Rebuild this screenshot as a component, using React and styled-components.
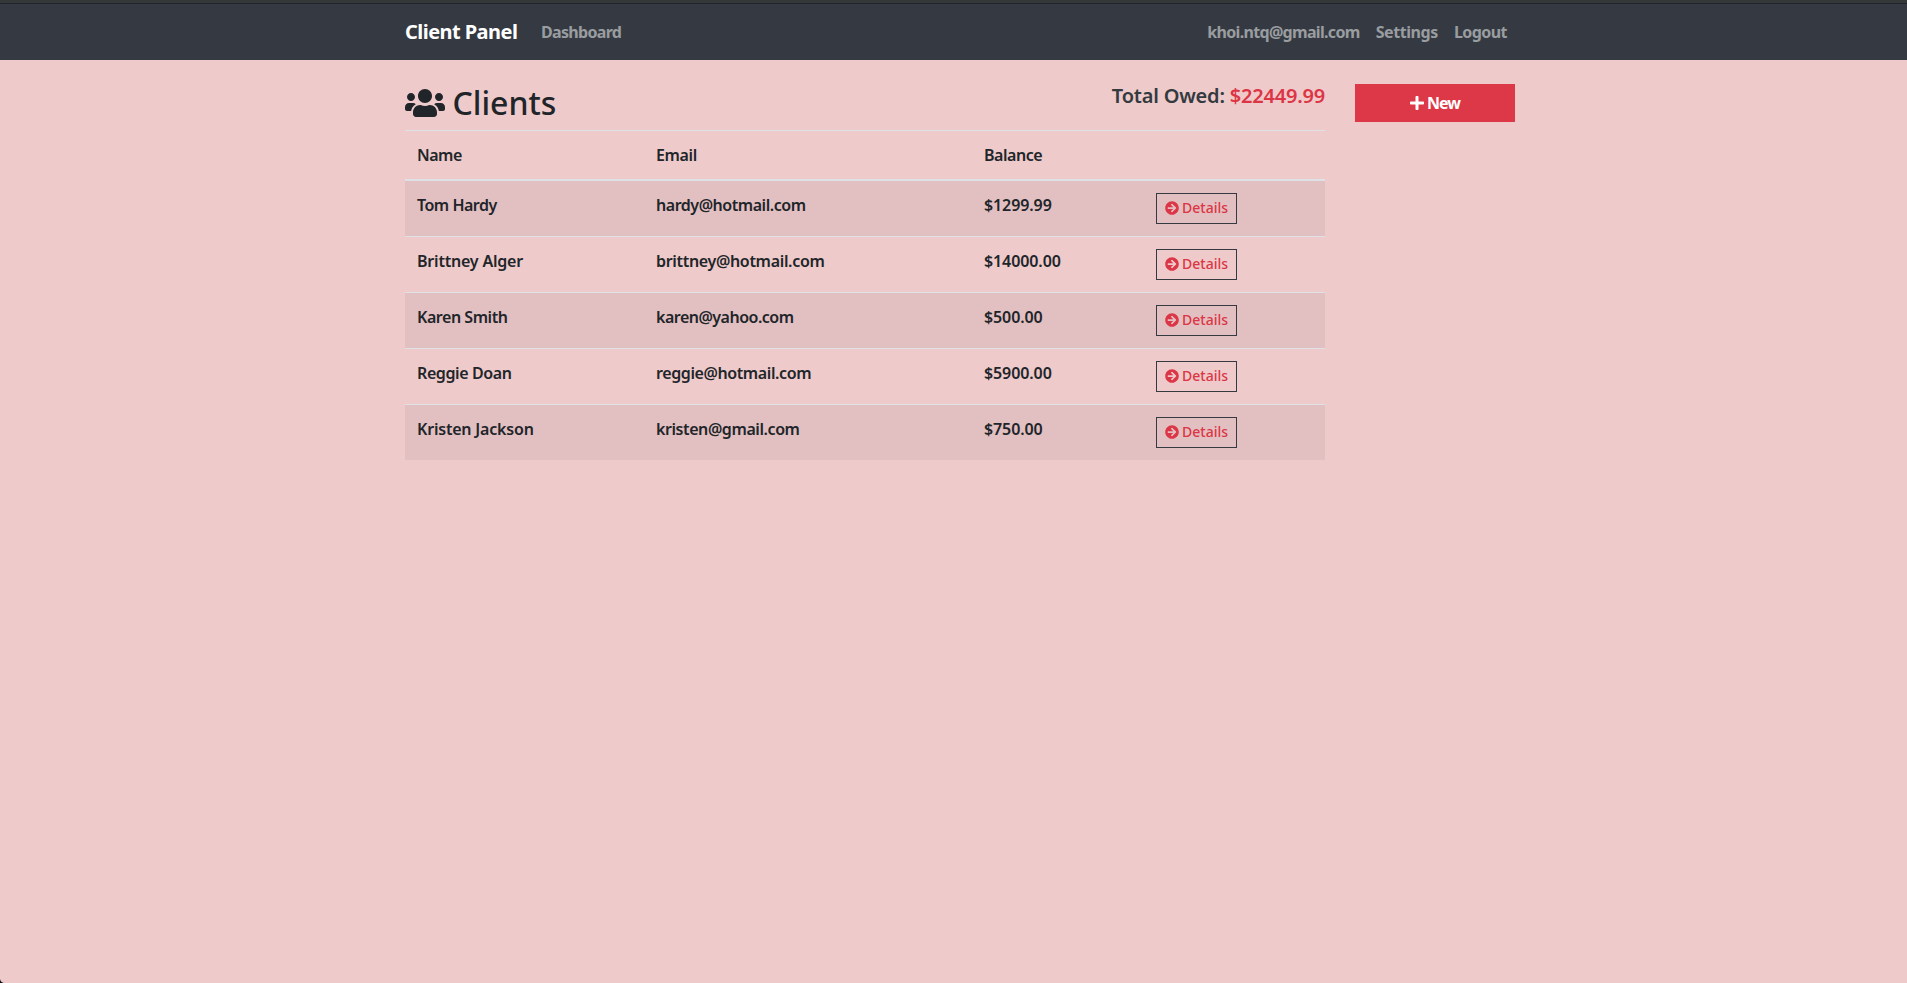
import React from "react";
import styled, { createGlobalStyle } from "styled-components";
import { FaUsers, FaPlus, FaArrowCircleRight } from "react-icons/fa";

const GlobalStyle = createGlobalStyle`
  *, *::before, *::after { box-sizing: border-box; }
  body {
    margin: 0;
    background: #eecaca;
    color: #212529;
    font: 600 16px/24px "Noto Sans", sans-serif;
    overflow: hidden;
  }
`;

const Page = styled.div`
  min-height: 100vh;
`;

const Container = styled.div`
  width: 1110px;
  margin-left: 405px;
  display: flex;
`;

const TopEdge = styled.div`
  height: 4px;
  background: #343838;
  border-bottom: 1px solid #22262a;
`;

const Navbar = styled.nav`
  height: 56px;
  display: flex;
  align-items: center;
  background: #353a42;
`;

const NavInner = styled(Container)`
  align-items: center;
`;

const Tracked = styled.span`
  letter-spacing: ${(p) => p.$track || 0}px;
  white-space: nowrap;
`;

const Brand = styled(Tracked)`
  width: 128px;
  color: #fff;
  font-size: 20px;
  font-weight: 700;
  line-height: 30px;
`;

const NavLink = styled(Tracked).attrs({ as: "a" })`
  padding: 0 8px;
  color: #9a9da0;
  font-weight: 700;
`;

const NavRight = styled.div`
  display: flex;
  margin-left: auto;
`;

const Main = styled.main`
  width: 920px;
`;

const Content = styled(Container)`
  padding-top: 24px;
  gap: 30px;
  align-items: flex-start;
`;

const Header = styled.header`
  display: flex;
  justify-content: space-between;
  height: 46px;
`;

const Title = styled.h2`
  margin: 0;
  display: flex;
  align-items: center;
  gap: 7.5px;
  height: 38px;
  font-size: 32px;
  font-weight: 550;
  line-height: 38px;

  svg { width: 40px; height: 32px; }
`;

const Total = styled.h5`
  margin: 0;
  color: #343a40;
  font-size: 20px;
  font-weight: 600;
  line-height: 23px;
  letter-spacing: -0.2px;
`;

const Amount = styled.span`
  color: #dc3545;
`;

const Table = styled.table`
  width: 100%;
  table-layout: fixed;
  border-spacing: 0;
`;

const HeadCell = styled.th`
  width: ${(p) => p.$width}px;
  height: 51px;
  padding: 12px;
  border-top: 1px solid #dee2e6;
  border-bottom: 2px solid #dee2e6;
  font-weight: 600;
  text-align: left;
`;

const Cell = styled.td`
  padding: 12px;
  vertical-align: top;
  border-top: 1px solid #dee2e6;
`;

const Row = styled.tr`
  height: 56px;

  &:nth-child(odd) { background: #e2c0c1; }
  &:first-child { height: 55px; }
  &:first-child ${Cell} { border-top: 0; }
`;

const DetailsButton = styled.a`
  display: flex;
  align-items: center;
  gap: 3px;
  width: 81px;
  height: 31px;
  padding: 0 8px 2px;
  border: 1px solid #343a40;
  color: #dc3545;
  font-size: 14px;
  font-weight: 500;
  line-height: 21px;

  svg { flex: none; width: 14px; height: 14px; }
`;

const NewButton = styled.a`
  display: flex;
  align-items: center;
  justify-content: center;
  gap: 3px;
  width: 160px;
  height: 38px;
  background: #dc3848;
  color: #fff;
  font-weight: 700;

  svg { width: 14px; height: 16px; }
`;

const Corner = styled.svg`
  position: fixed;
  left: 0;
  bottom: 0;
  width: 4px;
  height: 4px;
`;

const columns = [
  { label: "Name", width: 239, track: -0.5 },
  { label: "Email", width: 328, track: -0.35 },
  { label: "Balance", width: 172, track: -0.45 },
  { label: "", width: 181 },
];

const clients = [
  { name: "Tom Hardy", nameTrack: -0.5, email: "hardy@hotmail.com", emailTrack: -0.46, balance: "$1299.99" },
  { name: "Brittney Alger", nameTrack: -0.2, email: "brittney@hotmail.com", emailTrack: -0.32, balance: "$14000.00" },
  { name: "Karen Smith", nameTrack: -0.45, email: "karen@yahoo.com", emailTrack: -0.5, balance: "$500.00" },
  { name: "Reggie Doan", nameTrack: -0.4, email: "reggie@hotmail.com", emailTrack: -0.4, balance: "$5900.00" },
  { name: "Kristen Jackson", nameTrack: -0.2, email: "kristen@gmail.com", emailTrack: -0.42, balance: "$750.00" },
];

export default function App() {
  return (
    <Page>
      <GlobalStyle />
      <TopEdge />
      <Navbar>
        <NavInner>
          <Brand $track={-0.55}>Client Panel</Brand>
          <NavLink $track={-0.68}>Dashboard</NavLink>
          <NavRight>
            <NavLink $track={-0.68}>khoi.ntq@gmail.com</NavLink>
            <NavLink $track={-0.42}>Settings</NavLink>
            <NavLink $track={-0.55}>Logout</NavLink>
          </NavRight>
        </NavInner>
      </Navbar>
      <Content>
        <Main>
          <Header>
            <Title><FaUsers />Clients</Title>
            <Total>Total Owed: <Amount>$22449.99</Amount></Total>
          </Header>
          <Table>
            <thead>
              <tr>
                {columns.map((c) => (
                  <HeadCell key={c.label} $width={c.width}><Tracked $track={c.track}>{c.label}</Tracked></HeadCell>
                ))}
              </tr>
            </thead>
            <tbody>
              {clients.map((c) => (
                <Row key={c.name}>
                  <Cell><Tracked $track={c.nameTrack}>{c.name}</Tracked></Cell>
                  <Cell><Tracked $track={c.emailTrack}>{c.email}</Tracked></Cell>
                  <Cell><Tracked $track={-0.1}>{c.balance}</Tracked></Cell>
                  <Cell><DetailsButton><FaArrowCircleRight />Details</DetailsButton></Cell>
                </Row>
              ))}
            </tbody>
          </Table>
        </Main>
        <NewButton><FaPlus /><Tracked $track={-0.9}>New</Tracked></NewButton>
      </Content>
      <Corner viewBox="0 0 4 4"><path d="M0 0C0.3 2.2 1.8 3.7 4 4H0Z" fill="#111" /></Corner>
    </Page>
  );
}
